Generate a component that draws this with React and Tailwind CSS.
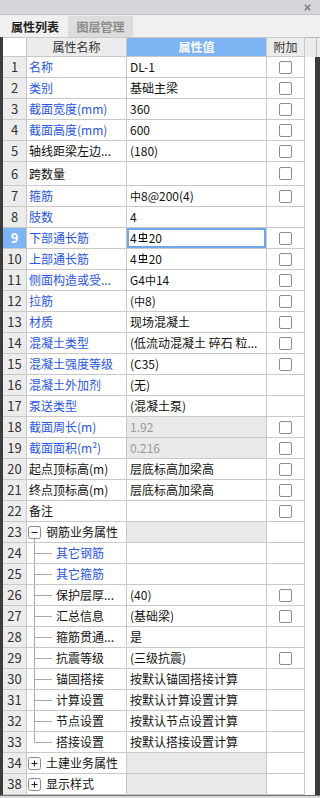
import React from 'react';

const FONT = { fontFamily: '"Noto Sans CJK SC", "Microsoft YaHei", sans-serif' };

function HPB() {
  return <span className="text-[11px] align-[1px]">中</span>;
}

function HRB() {
  return (
    <svg width="10" height="12" viewBox="0 0 10 12" className="inline-block align-[2px] mx-[1px]">
      <rect x="1.5" y="2.5" width="7" height="4" fill="none" stroke="#111" strokeWidth="1" />
      <line x1="5" y1="0.5" x2="5" y2="9.5" stroke="#111" strokeWidth="1" />
      <line x1="0.5" y1="9.5" x2="9.5" y2="9.5" stroke="#111" strokeWidth="1" />
    </svg>
  );
}

function Check() {
  return <div className="w-[13px] h-[13px] border border-[#8c8c8c] rounded-[2px] bg-white" />;
}

function ToggleBox({ open, line }) {
  return (
    <svg width="16" height="21" viewBox="0 0 16 21" className="shrink-0">
      {line && <line x1="7.5" y1="16" x2="7.5" y2="21" stroke="#a9a9a9" strokeWidth="1" />}
      <rect x="1.5" y="4.5" width="12" height="12" rx="2" fill="#fff" stroke="#8a8a8a" strokeWidth="1" />
      <line x1="4.5" y1="10.5" x2="10.5" y2="10.5" stroke="#222" strokeWidth="1" />
      {!open && <line x1="7.5" y1="7.5" x2="7.5" y2="13.5" stroke="#222" strokeWidth="1" />}
    </svg>
  );
}

function Branch({ last }) {
  return (
    <svg width="27" height="21" viewBox="0 0 27 21" className="shrink-0">
      <line x1="7.5" y1="0" x2="7.5" y2={last ? 10.5 : 21} stroke="#a9a9a9" strokeWidth="1" />
      <line x1="7.5" y1="10.5" x2="25" y2="10.5" stroke="#a9a9a9" strokeWidth="1" />
    </svg>
  );
}

const rows = [
  { n: 1, name: '名称', blue: true, value: 'DL-1', cb: true },
  { n: 2, name: '类别', blue: true, value: '基础主梁', cb: true },
  { n: 3, name: '截面宽度(mm)', blue: true, value: '360', cb: true },
  { n: 4, name: '截面高度(mm)', blue: true, value: '600', cb: true },
  { n: 5, name: '轴线距梁左边...', value: '(180)', cb: true },
  { n: 6, name: '跨数量', value: '', cb: true, tall: true },
  { n: 7, name: '箍筋', blue: true, value: <><HPB />8@200(4)</>, cb: true },
  { n: 8, name: '肢数', blue: true, value: '4' },
  { n: 9, name: '下部通长筋', blue: true, value: <>4<HRB />20</>, cb: true, sel: true },
  { n: 10, name: '上部通长筋', blue: true, value: <>4<HRB />20</>, cb: true },
  { n: 11, name: '侧面构造或受...', blue: true, value: <>G4<HPB />14</>, cb: true },
  { n: 12, name: '拉筋', blue: true, value: <>(<HPB />8)</>, cb: true },
  { n: 13, name: '材质', blue: true, value: '现场混凝土', cb: true },
  { n: 14, name: '混凝土类型', blue: true, value: '(低流动混凝土 碎石 粒...', cb: true },
  { n: 15, name: '混凝土强度等级', blue: true, value: '(C35)', cb: true },
  { n: 16, name: '混凝土外加剂', blue: true, value: '(无)' },
  { n: 17, name: '泵送类型', blue: true, value: '(混凝土泵)' },
  { n: 18, name: '截面周长(m)', blue: true, value: '1.92', cb: true, grayVal: true },
  { n: 19, name: '截面面积(m²)', blue: true, value: '0.216', cb: true, grayVal: true },
  { n: 20, name: '起点顶标高(m)', value: '层底标高加梁高', cb: true },
  { n: 21, name: '终点顶标高(m)', value: '层底标高加梁高', cb: true },
  { n: 22, name: '备注', value: '', cb: true },
  { n: 23, name: '钢筋业务属性', group: 'open', value: '', shade: true },
  { n: 24, name: '其它钢筋', blue: true, child: true, value: '' },
  { n: 25, name: '其它箍筋', blue: true, child: true, value: '' },
  { n: 26, name: '保护层厚...', child: true, value: '(40)', cb: true },
  { n: 27, name: '汇总信息', child: true, value: '(基础梁)', cb: true },
  { n: 28, name: '箍筋贯通...', child: true, value: '是' },
  { n: 29, name: '抗震等级', child: true, value: '(三级抗震)', cb: true },
  { n: 30, name: '锚固搭接', child: true, value: '按默认锚固搭接计算' },
  { n: 31, name: '计算设置', child: true, value: '按默认计算设置计算' },
  { n: 32, name: '节点设置', child: true, value: '按默认节点设置计算' },
  { n: 33, name: '搭接设置', child: true, last: true, value: '按默认搭接设置计算' },
  { n: 34, name: '土建业务属性', group: 'closed', value: '', shade: true },
  { n: 38, name: '显示样式', group: 'closed', value: '', shade: true },
];

function Row({ r }) {
  const nameColor = r.blue ? 'text-[#2a55e2]' : 'text-[#111]';
  let nameCell;
  if (r.group) {
    nameCell = (
      <div className="flex items-center h-full">
        <ToggleBox open={r.group === 'open'} line={r.group === 'open'} />
        <span className={`ml-[3px] ${nameColor}`}>{r.name}</span>
      </div>
    );
  } else if (r.child) {
    nameCell = (
      <div className="flex items-center h-full">
        <Branch last={r.last} />
        <span className={`ml-[2px] whitespace-nowrap ${nameColor}`}>{r.name}</span>
      </div>
    );
  } else {
    nameCell = <span className={`pl-[2px] whitespace-nowrap ${nameColor}`}>{r.name}</span>;
  }

  return (
    <div className={`flex ${r.tall ? 'h-[24px]' : 'h-[21px]'}`}>
      <div className="w-[3px] bg-[#3b3b3b]" />
      <div
        className={`w-[24px] border-r border-b border-[#c9c9c9] flex items-center justify-center text-[13px] ${
          r.sel ? 'bg-[#7cb4f4] text-white font-bold' : 'bg-[#ececec] text-[#333]'
        }`}
      >
        {r.n}
      </div>
      <div className="w-[100px] border-r border-b border-[#c9c9c9] bg-white flex items-center overflow-hidden text-[12px]">
        {nameCell}
      </div>
      <div
        className={`w-[140px] border-r border-b border-[#c9c9c9] flex items-center pl-[3px] text-[12px] whitespace-nowrap overflow-hidden ${
          r.grayVal ? 'bg-[#e9e9e9] text-[#9a9a9a]' : r.shade ? 'bg-[#e9e9e9] text-[#111]' : 'bg-white text-[#111]'
        } ${r.sel ? 'shadow-[inset_0_0_0_2px_#6fa8ea]' : ''}`}
      >
        {r.value}
      </div>
      <div className="w-[38px] border-r border-b border-[#c9c9c9] bg-white flex items-center justify-center">
        {r.cb && <Check />}
      </div>
      <div className="w-[10px] bg-white" />
      <div className="w-[5px] bg-[#3b3b3b]" />
    </div>
  );
}

export default function App() {
  return (
    <div className="w-[320px] h-[798px] flex flex-col bg-[#f0f0f0] overflow-hidden" style={FONT}>
      <div className="h-[14px] bg-[#d5d6da] flex items-center justify-end pr-[9px]">
        <svg width="7" height="7" viewBox="0 0 7 7">
          <path d="M0.8 0.8 L6.2 6.2 M6.2 0.8 L0.8 6.2" stroke="#7d7d7d" strokeWidth="1.6" />
        </svg>
      </div>
      <div className="h-[23px] bg-[#f0f0f0] border-t border-[#c4c4c4] flex items-end pl-[3px] pr-[4px]">
        <div className="w-[64px] h-[21px] flex items-center justify-center text-[12px] font-bold text-[#222]">
          属性列表
        </div>
        <div className="w-[65px] h-[21px] ml-[1px] bg-[#dcdcdc] flex items-center justify-center text-[12px] font-bold text-[#8c8c8c]">
          图层管理
        </div>
      </div>
      <div className="flex h-[20px] text-[12px]">
        <div className="w-[3px] bg-[#3b3b3b]" />
        <div className="w-[24px] bg-white border-b border-t border-r border-[#c9c9c9]" />
        <div className="w-[100px] bg-[#ececec] border-b border-t border-r border-[#c9c9c9] flex items-center justify-center text-[#333]">
          属性名称
        </div>
        <div className="w-[140px] bg-[#7cb4f4] border-b border-t border-r border-[#c9c9c9] flex items-center justify-center text-white font-bold">
          属性值
        </div>
        <div className="w-[38px] bg-[#ececec] border-b border-t border-r border-[#c9c9c9] flex items-center justify-center text-[#333]">
          附加
        </div>
        <div className="w-[12px] bg-[#ececec] border-t border-r border-[#b8b8b8]" />
        <div className="w-[3px] bg-[#ececec] border-t border-[#b8b8b8]" />
      </div>
      {rows.map((r) => (
        <Row key={r.n} r={r} />
      ))}
      <div className="flex-1 bg-[#d9d9d9] border-t border-[#707070]" />
    </div>
  );
}
